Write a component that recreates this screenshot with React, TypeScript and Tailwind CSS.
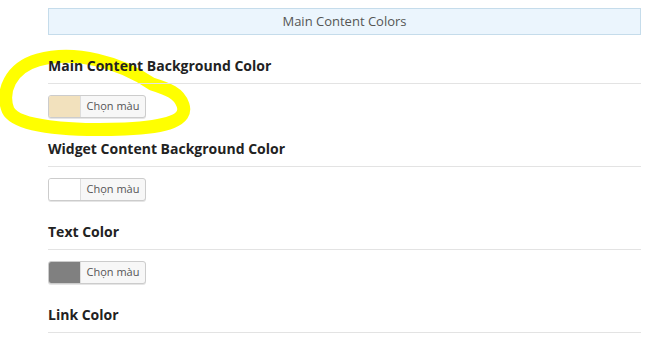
import React from 'react';

const colorFields = [
  { label: 'Main Content Background Color', color: '#f2e1bd' },
  { label: 'Widget Content Background Color', color: '#ffffff' },
  { label: 'Text Color', color: '#808080' },
  { label: 'Link Color', color: null },
];

const ColorButton = ({ color }: { color: string }) => (
  <button className="flex h-[23px] w-[98px] items-stretch overflow-hidden rounded-[3px] border border-[#cccccc] bg-[#f7f7f7] shadow-[0_1px_0_#e5e5e5]">
    <span className="w-[32px] border-r border-[#dddddd]" style={{ backgroundColor: color }} />
    <span className="flex flex-1 items-center justify-center text-[11px] text-[#555555]">Chọn màu</span>
  </button>
);

const App = () => {
  return (
    <div className="relative h-[339px] w-[653px] overflow-hidden bg-white font-['Open_Sans',sans-serif]">
      {/* highlighter mark */}
      <svg className="absolute left-0 top-0" width="200" height="145" viewBox="0 0 200 145">
        <path
          d="M 152 84 C 120 62, 75 50, 38 60 C 10 68, 1 92, 8 110 C 16 127, 70 131, 125 129 C 168 127, 188 120, 183 105 C 179 93, 168 89, 152 84"
          fill="none"
          stroke="#ffff00"
          strokeWidth="13"
          strokeLinecap="round"
        />
      </svg>

      <div className="relative pl-[48px] pr-[12px] pt-[8px]">
        <div className="flex h-[27px] items-center justify-center border border-[#c5dceb] bg-[#ebf5fd] text-[13px] text-[#555555]">
          Main Content Colors
        </div>

        {colorFields.map((field) => (
          <div key={field.label} className="mt-[21px]">
            <div className="border-b border-[#e3e3e3] pb-[7px] text-[14px] font-bold leading-[20px] text-[#222222]">
              {field.label}
            </div>
            {field.color && (
              <div className="mt-[11px]">
                <ColorButton color={field.color} />
              </div>
            )}
          </div>
        ))}
      </div>
    </div>
  );
};

export default App;
